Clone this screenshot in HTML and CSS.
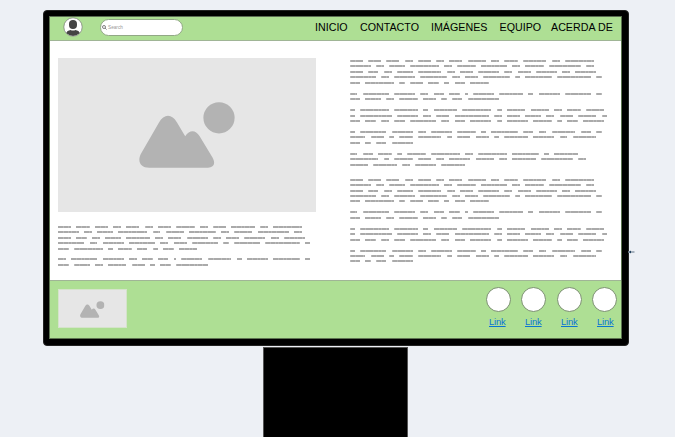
FILE: index.html
```html
<!DOCTYPE html>
<html lang="es">
<head>
<meta charset="utf-8">
<title>Inicio</title>
<link rel="stylesheet" href="styles.css">
</head>
<body>
<svg class="defs" width="0" height="0" aria-hidden="true">
  <symbol id="landscape" viewBox="0 0 96 66">
    <path d="M10 65.700C2 65.700-2 60 1.800 52L20 20.500C25 11.500 33 11.500 38 20.500L46.200 34.200C50.500 27.500 56.500 27.500 60.500 34L73.500 55.500C77 61.500 74.500 65.700 69 65.700Z"/>
    <circle cx="80" cy="15.800" r="15.600"/>
  </symbol>
</svg>
<div class="monitor">
  <div class="screen">
    <header class="topbar">
      <svg class="avatar" viewBox="0 0 20 20">
        <defs><clipPath id="face"><circle cx="10" cy="10" r="9"/></clipPath></defs>
        <circle cx="10" cy="10" r="9.200" fill="#fff"/>
        <g clip-path="url(#face)" fill="#444">
          <rect x="6" y="3" width="8" height="9" rx="3.900"/>
          <path d="M3 20V16Q4 13.300 7.500 12.900Q10 14 12.500 12.900Q16 13.300 17 16V20Z"/>
        </g>
        <circle cx="10" cy="10" r="9.200" fill="none" stroke="#777" stroke-width=".7"/>
      </svg>
      <div class="search">
        <svg class="lens" viewBox="0 0 6 6"><circle cx="2.400" cy="2.400" r="1.800"/><path d="M3.700 3.700L5.500 5.500"/></svg>
        <span>Search</span>
      </div>
      <nav class="menu"><span>INICIO</span><span>CONTACTO</span><span>IMÁGENES</span><span>EQUIPO</span><span>ACERDA DE</span></nav>
    </header>
    <main class="content">
      <section class="left">
        <div class="picture"><svg class="art"><use href="#landscape"/></svg></div>
        <div class="copy" data-paragraphs="0 1"></div>
      </section>
      <section class="right">
        <div class="copy" data-paragraphs="0 1 2 3 4"></div>
        <div class="copy" data-paragraphs="0 1 2 3"></div>
      </section>
    </main>
    <footer class="bottom">
      <div class="thumb"><svg class="art"><use href="#landscape"/></svg></div>
      <div class="social">
        <div class="circles"><i></i><i></i><i></i><i></i></div>
        <div class="links"><a href="#">Link</a><a href="#">Link</a><a href="#">Link</a><a href="#">Link</a></div>
      </div>
    </footer>
  </div>
  <svg class="button" viewBox="0 0 7 4"><path d="M0 2H6.500" stroke="#8795a5" stroke-width="1.400"/><path d="M1 2L3 .5V3.500Z" fill="#1d3f5c"/></svg>
</div>
<div class="stand"></div>
<script src="copy.js"></script>
</body>
</html>
```
FILE: styles.css
```css
* { box-sizing: border-box; }
body {
  margin: 0;
  height: 437px;
  padding-top: 10px;
  overflow: hidden;
  background: #edf0f5;
  font-family: "Liberation Sans", Arial, sans-serif;
}
.defs { position: absolute; }
.monitor {
  position: relative;
  width: 586px;
  height: 336px;
  margin-left: 43px;
  padding: 5px;
  background: #000;
  border: 1px solid #222;
  border-radius: 4px;
}
.screen {
  display: flex;
  flex-direction: column;
  width: 573px;
  height: 323px;
  background: #fff;
  border: 1px solid #5c7350;
  border-top-color: #5c6c53;
}
.topbar {
  display: flex;
  flex: none;
  align-items: center;
  height: 24px;
  padding-left: 12.500px;
  background: #aedf94;
  border-bottom: 1px solid #a0b596;
}
.avatar { width: 20px; height: 20px; margin-top: -3px; }
.search {
  display: flex;
  align-items: center;
  width: 83px;
  height: 17px;
  margin: -2px 0 0 17px;
  padding-left: 1.500px;
  background: #fff;
  border: 1px solid #92a886;
  border-radius: 9px;
  color: #999;
  font-size: 4.700px;
}
.lens { width: 5px; height: 5px; margin-right: 1px; fill: none; stroke: #444; stroke-width: 0.800; }
.menu {
  display: grid;
  grid-template-columns: 45px 71px 68.500px 51.500px auto;
  margin: -2px 0 0 132.500px;
  color: #000;
  font-size: 10.700px;
  line-height: 13px;
  white-space: nowrap;
}
.content { display: flex; flex: 1; padding-left: 8px; min-height: 0; }
.left { width: 291.600px; padding-top: 17px; }
.right { padding-top: 17.300px; }
.picture {
  display: flex;
  width: 258px;
  height: 154px;
  padding: 44px 0 0 81px;
  background: #e6e6e6;
}
.picture .art { width: 96px; height: 66px; }
.art { fill: #b3b3b3; }
.left .copy { padding-top: 12px; }
.copy { display: flex; flex-direction: column; gap: 5.455px; }
.right .copy + .copy { margin-top: 9.550px; }
.line { display: flex; align-items: center; gap: 5.250px; height: 5.455px; }
.word {
  height: 2px;
  background: repeating-linear-gradient(90deg, #bcbcbc 0 0.500px, #aaa 0.500px 2.625px);
}
.bottom {
  display: flex;
  flex: none;
  justify-content: space-between;
  height: 58px;
  padding: 8px 4px 0 8px;
  background: #aedf94;
  border-top: 1px solid #a0b596;
}
.thumb {
  display: flex;
  width: 69px;
  height: 39px;
  padding: 11px 0 0 21px;
  background: #e6e6e6;
  border: 1px solid #d5e3cb;
}
.thumb .art { width: 24.500px; height: 17px; }
.social { width: 131px; margin-top: -2px; }
.circles { display: flex; justify-content: space-between; }
.circles i { width: 25px; height: 25px; background: #fff; border: 1px solid #7b9070; border-radius: 50%; }
.links { display: grid; grid-template-columns: repeat(4, 36px); margin: 4px 0 0 3px; }
.links a { color: #0b74d4; font-size: 9.400px; letter-spacing: -0.150px; line-height: 11px; }
.button { position: absolute; left: 584px; top: 239px; width: 7px; height: 4px; }
.stand {
  width: 145px;
  height: 100px;
  margin: 1px 0 0 263px;
  background: #000;
  border: 1px solid #555;
}
```
FILE: copy.js
```js
// Word lengths, in characters, for each line of each placeholder paragraph.
const CHAR = 2.625;
const paragraphs = [
  ["5 5 5 3 5 3 5 7 3 5 9 3 11", "8 3 6 11 3 7 10 3 7 12 3", "5 4 3 6 9 3 5 8 3 5 8 3 8", "10 3 8 10 3 5 10 2 10 13 2", "4 11 2 5 4 2 4 7"],
  ["3 10 8 3 4 4 1 8 9 2 8 10 2", "4 6 3 7 5 2 4 12"],
  ["2 11 9 2 9 11 2 7 7 3 5 7", "2 12 8 3 5 13 3 5 6 3 5 7 2", "4 4 3 4 10 3 4 8 2 8 7 2 4 8"],
  ["2 10 8 3 8 7 2 10 4 3 9 4 2", "6 5 2 5 9 2 5 5 2 9 8 3 9", "4 2 4 8"],
  ["3 4 5 2 7 11 3 11 10 2 9", "11 2 7 5 3 8 7 3 9 12 3", "7 9 3 8 9"]
];

document.querySelectorAll(".copy").forEach(copy => {
  copy.dataset.paragraphs.split(" ").forEach(index => {
    const paragraph = document.createElement("div");
    paragraphs[index].forEach(words => {
      const line = document.createElement("div");
      line.className = "line";
      words.split(" ").forEach(length => {
        const word = document.createElement("span");
        word.className = "word";
        word.style.width = length * CHAR + "px";
        line.append(word);
      });
      paragraph.append(line);
    });
    copy.append(paragraph);
  });
});
```
